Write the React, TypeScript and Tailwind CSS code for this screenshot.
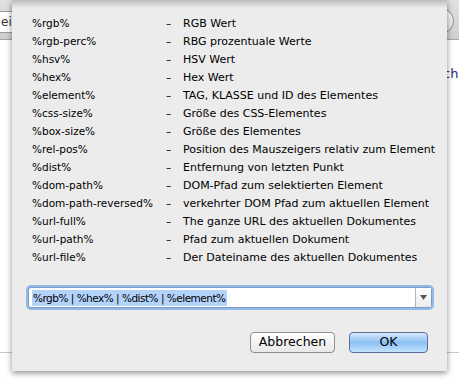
const rows: [string, string][] = [
  ["%rgb%", "RGB Wert"],
  ["%rgb-perc%", "RBG prozentuale Werte"],
  ["%hsv%", "HSV Wert"],
  ["%hex%", "Hex Wert"],
  ["%element%", "TAG, KLASSE und ID des Elementes"],
  ["%css-size%", "Größe des CSS-Elementes"],
  ["%box-size%", "Größe des Elementes"],
  ["%rel-pos%", "Position des Mauszeigers relativ zum Element"],
  ["%dist%", "Entfernung von letzten Punkt"],
  ["%dom-path%", "DOM-Pfad zum selektierten Element"],
  ["%dom-path-reversed%", "verkehrter DOM Pfad zum aktuellen Element"],
  ["%url-full%", "The ganze URL des aktuellen Dokumentes"],
  ["%url-path%", "Pfad zum aktuellen Dokument"],
  ["%url-file%", "Der Dateiname des aktuellen Dokumentes"],
];

export default function App() {
  return (
    <div
      className="relative w-[459px] h-[381px] overflow-hidden bg-white text-[10.5px] text-black"
      style={{ fontFamily: '"DejaVu Sans", "Noto Sans", sans-serif' }}
    >
      {/* window behind the sheet */}
      <div className="absolute left-0 top-0 w-full h-[40px] bg-gradient-to-b from-[#e2e2e2] to-[#cfcfcf] border-b border-[#a5a5a5]" />
      <div className="absolute left-0 top-[11px] w-[20px] h-[22px] bg-white border-y border-[#9a9a9a] text-[12px] leading-[20px] text-[#333] pl-px">
        ei
      </div>
      <div className="absolute left-[420px] top-[8px] w-[34px] h-[26px] rounded-full border border-[#8d8d8d] bg-gradient-to-b from-white to-[#dcdcdc]" />
      <div className="absolute left-[443px] top-[64px] text-[13px] text-[#1e2a6e]">ch</div>
      <div className="absolute left-0 top-[352px] w-full h-px bg-[#c8c8c8]" />

      {/* sheet */}
      <div className="relative ml-[12px] w-[435px] h-[371px] bg-[#ececec] shadow-[0_2px_6px_rgba(0,0,0,0.45)]">
        <div className="absolute inset-x-0 top-0 h-[8px] bg-gradient-to-b from-[#bdbdbd] to-[#ececec]" />
        <div className="relative pt-[14px] pl-[20px]">
          {rows.map(([k, v]) => (
            <div key={k} className="flex items-baseline h-[18px] leading-[18px] whitespace-nowrap">
              <span className="w-[134px]">{k}</span>
              <span className="w-[17px]">–</span>
              <span className="text-[11px]">{v}</span>
            </div>
          ))}
        </div>

        <div className="absolute left-[16px] top-[287px] w-[404px] h-[21px] rounded-[3px] bg-white border border-[#7a9cc9] shadow-[0_0_0_2px_#93b9e8] flex items-center">
          <span className="ml-[3px] bg-[#b4d3fb] leading-[16px] px-px tracking-[-0.5px]">
            %rgb% | %hex% | %dist% | %element%
          </span>
          <div className="ml-auto w-[16px] h-full border-l border-[#b5b5b5] flex items-center justify-center bg-gradient-to-b from-white to-[#ececec]">
            <svg width="7" height="5" viewBox="0 0 7 5">
              <path d="M0 0h7L3.5 5z" fill="#555" />
            </svg>
          </div>
        </div>

        <div className="absolute right-[19px] top-[332px] flex gap-[14px]">
          <button className="w-[85px] h-[21px] rounded-[4px] border border-[#8f8f8f] bg-gradient-to-b from-white to-[#e8e8e8] text-[12.5px] leading-none">
            Abbrechen
          </button>
          <button className="w-[79px] h-[21px] rounded-[4px] border border-[#5a6f9b] bg-gradient-to-b from-[#d6e9fc] via-[#8cc0f3] to-[#c4e3fd] text-[12.5px] leading-none">
            OK
          </button>
        </div>
      </div>
    </div>
  );
}
